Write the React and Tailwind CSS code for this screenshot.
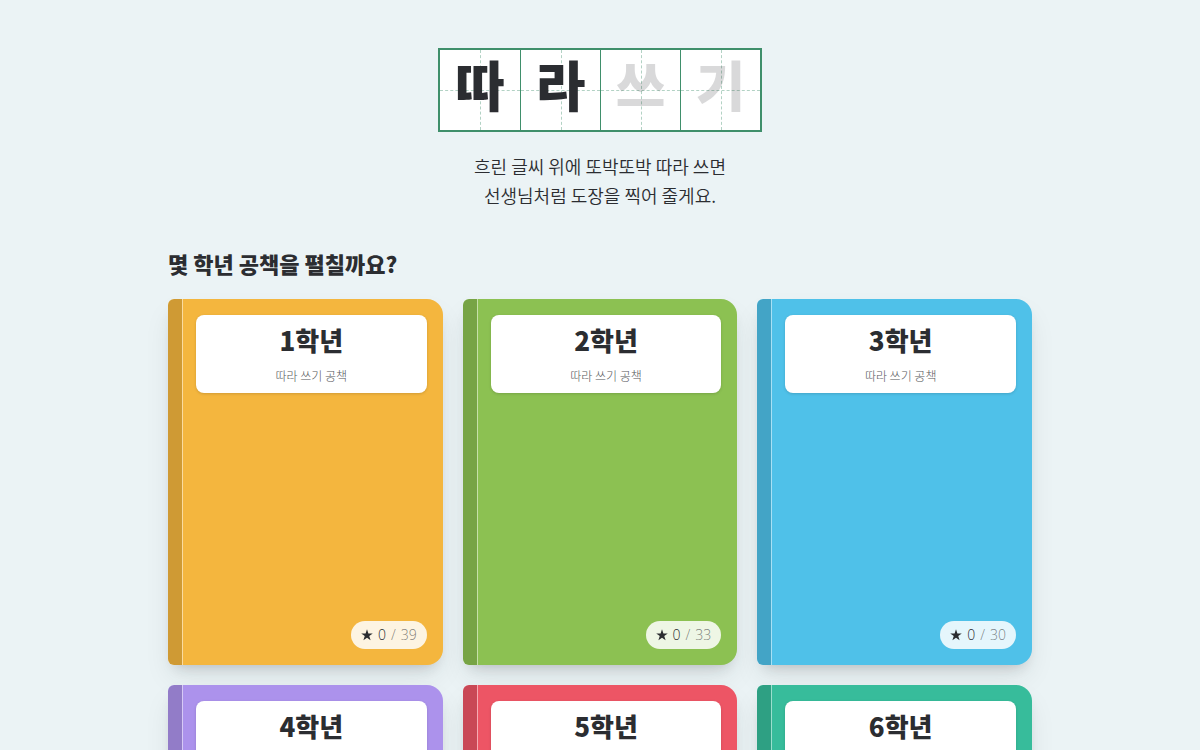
const letters = [
  { char: '따', ghost: false },
  { char: '라', ghost: false },
  { char: '쓰', ghost: true },
  { char: '기', ghost: true },
];

const notebooks = [
  { grade: 1, done: 0, total: 39, cover: 'bg-[#f4b63e]' },
  { grade: 2, done: 0, total: 33, cover: 'bg-[#8cc152]' },
  { grade: 3, done: 0, total: 30, cover: 'bg-[#4fc1e9]' },
  { grade: 4, done: 0, total: 30, cover: 'bg-[#ac92ec]' },
  { grade: 5, done: 0, total: 30, cover: 'bg-[#ed5565]' },
  { grade: 6, done: 0, total: 30, cover: 'bg-[#37bc9b]' },
];

function LetterCell({ char, ghost }) {
  return (
    <span className="relative flex h-20 w-20 items-center justify-center border-l border-[#3f8f6b] first:border-l-0">
      <span className="absolute inset-x-0 top-1/2 border-t border-dashed border-[#3f8f6b]/40" />
      <span className="absolute inset-y-0 left-1/2 border-l border-dashed border-[#3f8f6b]/40" />
      <span
        className={`relative pb-3 text-[54px] leading-none font-black ${ghost ? 'text-[#2b2d31]/18' : 'text-[#2b2d31]'}`}
      >
        {char}
      </span>
    </span>
  );
}

function Notebook({ grade, done, total, cover }) {
  return (
    <a
      href={`#grade-${grade}`}
      className={`relative flex aspect-3/4 flex-col items-stretch justify-between rounded-l-md rounded-r-2xl py-4 pr-4 pl-7 shadow-[0_8px_14px_-8px_rgba(43,45,49,0.25),0_14px_28px_-4px_rgba(43,45,49,0.1)] ${cover}`}
    >
      <span className="absolute inset-y-0 left-0 w-[15px] rounded-l-md border-r border-white/50 bg-black/15 bg-clip-padding" />
      <span className="flex flex-col items-center rounded-lg bg-white pt-[7px] pb-[5px] shadow-[0_1px_3px_rgba(0,0,0,0.15)]">
        <span className="text-[26px] leading-9 font-black text-[#2b2d31]">{grade}학년</span>
        <span className="pt-1.5 text-xs leading-6 font-light text-[#55575b]">따라 쓰기 공책</span>
      </span>
      <span className="flex h-7 items-center gap-[5px] self-end rounded-full bg-white/85 px-[10px] font-['Open_Sans','Noto_Sans_CJK_KR',sans-serif] text-sm font-light text-[#2b2d31]">
        <svg viewBox="0 0 24 24" className="h-3 w-3" fill="currentColor" aria-hidden="true">
          <path d="M12 0.500l2.800 8.300h8.700l-7 5.200 2.700 8.400L12 17.300l-7.200 5.100 2.700-8.400-7-5.200h8.700z" />
        </svg>
        <span>{done}</span>
        <span className="text-[#2b2d31]/60">/</span>
        <span className="text-[#2b2d31]/60">{total}</span>
      </span>
    </a>
  );
}

export default function App() {
  return (
    <div className="min-h-screen bg-[#ebf3f5] px-6 pt-12 pb-16 font-['Noto_Sans_CJK_KR',sans-serif] text-[#2b2d31]">
      <main className="mx-auto max-w-[864px]">
        <header className="flex flex-col items-center">
          <h1 className="flex border-2 border-[#3f8f6b] bg-white">
            {letters.map((letter) => (
              <LetterCell key={letter.char} {...letter} />
            ))}
          </h1>
          <p className="mt-5 text-center text-lg leading-[29px] font-[350]">
            흐린 글씨 위에 또박또박 따라 쓰면
            <br />
            선생님처럼 도장을 찍어 줄게요.
          </p>
        </header>
        <section className="mt-[37px]" aria-labelledby="pick-grade">
          <h2 id="pick-grade" className="text-[22px] leading-8 font-black">
            몇 학년 공책을 펼칠까요?
          </h2>
          <div className="mt-5 grid grid-cols-3 gap-5">
            {notebooks.map((book) => (
              <Notebook key={book.grade} {...book} />
            ))}
          </div>
        </section>
      </main>
    </div>
  );
}
